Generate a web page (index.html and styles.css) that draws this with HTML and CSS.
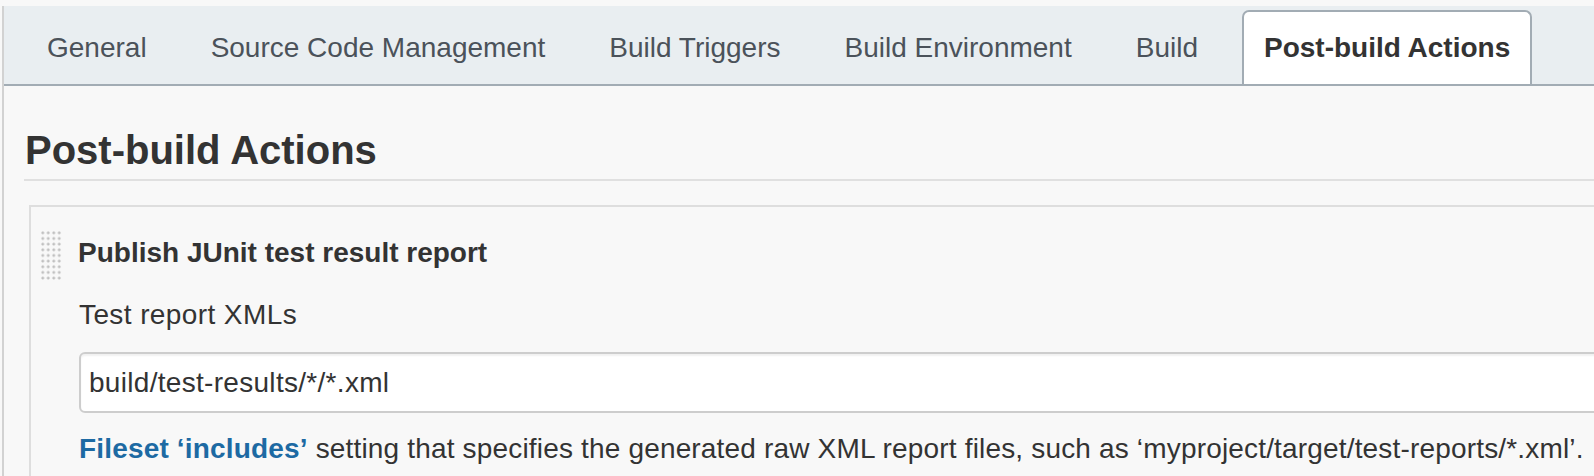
FILE: index.html
```html
<!DOCTYPE html>
<html lang="en">
<head>
<meta charset="utf-8">
<title>Post-build Actions</title>
<link rel="stylesheet" href="styles.css">
</head>
<body>
<div class="page">
  <div class="frame">
    <nav class="tabbar">
      <div class="tab">General</div>
      <div class="tab">Source Code Management</div>
      <div class="tab">Build Triggers</div>
      <div class="tab">Build Environment</div>
      <div class="tab">Build</div>
      <div class="tab tab-active">Post-build Actions</div>
    </nav>
    <section class="content">
      <h2 class="section-title">Post-build Actions</h2>
      <div class="card">
        <div class="card-head">
          <span class="grip" aria-hidden="true"></span>
          <span class="card-title">Publish JUnit test result report</span>
        </div>
        <div class="card-body">
          <div class="field-label">Test report XMLs</div>
          <input class="text-input" type="text" value="build/test-results/*/*.xml">
          <p class="help"><a class="help-link" href="#">Fileset ‘includes’</a> setting that specifies the generated raw XML report files, such as ‘myproject/target/test-reports/*.xml’.</p>
        </div>
      </div>
    </section>
  </div>
</div>
</body>
</html>
```
FILE: styles.css
```css
html, body {
  margin: 0;
  padding: 0;
  overflow: hidden;
  background: #f8f8f8;
}

body {
  font-family: "Liberation Sans", Arial, Helvetica, sans-serif;
  color: #333;
}

.page {
  padding-top: 6px;
  padding-left: 2px;
  height: 470px;
}

.frame {
  border-left: 2px solid #d2d2d2;
  height: 100%;
}

.tabbar {
  display: flex;
  align-items: flex-end;
  gap: 20px;
  height: 78px;
  padding-left: 21px;
  background: #e9eef1;
  border-bottom: 2px solid #a2acb4;
}

.tab {
  height: 72px;
  display: flex;
  align-items: center;
  padding: 0 20px;
  border: 2px solid transparent;
  border-bottom: none;
  border-radius: 7px 7px 0 0;
  font-size: 28px;
  color: #4b525a;
  white-space: nowrap;
}

.tab-active {
  margin-left: 2px;
  background: #fff;
  border-color: #a2acb4;
  color: #333;
  font-weight: bold;
}

.content {
  padding-left: 20px;
}

.section-title {
  margin: 40px 0 0 0;
  padding: 0 0 5px 1px;
  font-size: 40px;
  line-height: 48px;
  font-weight: bold;
  color: #333;
  border-bottom: 2px solid #e0e0e0;
  white-space: nowrap;
}

.card {
  margin: 24px 0 0 5px;
  width: 1680px;
  border: 2px solid #dedede;
  border-right: none;
  padding-top: 23px;
  height: 300px;
}

.card-head {
  display: flex;
  align-items: flex-start;
  gap: 16px;
  padding-left: 9px;
}

.grip {
  display: block;
  width: 22px;
  height: 51px;
  flex: none;
  background-image: radial-gradient(circle at center, #b9b9b9 0, #c4c4c4 1px, rgba(200,200,200,0) 1.9px);
  background-size: 5.5px 5.67px;
}

.card-title {
  font-size: 28px;
  line-height: 46px;
  font-weight: bold;
  color: #333;
  white-space: nowrap;
}

.card-body {
  padding-left: 48px;
}

.field-label {
  margin-top: 14px;
  font-size: 28px;
  line-height: 40px;
  letter-spacing: 0.4px;
  color: #333;
  white-space: nowrap;
}

.text-input {
  display: block;
  box-sizing: border-box;
  width: 100%;
  height: 61px;
  margin-top: 17px;
  padding: 0 8px;
  border: 2px solid #cdcdcd;
  border-radius: 6px;
  background: #fff;
  box-shadow: inset 0 2px 2px rgba(0, 0, 0, 0.06);
  font-family: "Liberation Sans", Arial, Helvetica, sans-serif;
  font-size: 28px;
  letter-spacing: 0.3px;
  color: #333;
  outline: none;
}

.help {
  margin: 16px 0 0 0;
  font-size: 28px;
  line-height: 40px;
  letter-spacing: 0.17px;
  color: #333;
  white-space: nowrap;
}

.help-link {
  color: #1d6aa3;
  font-weight: bold;
  text-decoration: none;
}
```
